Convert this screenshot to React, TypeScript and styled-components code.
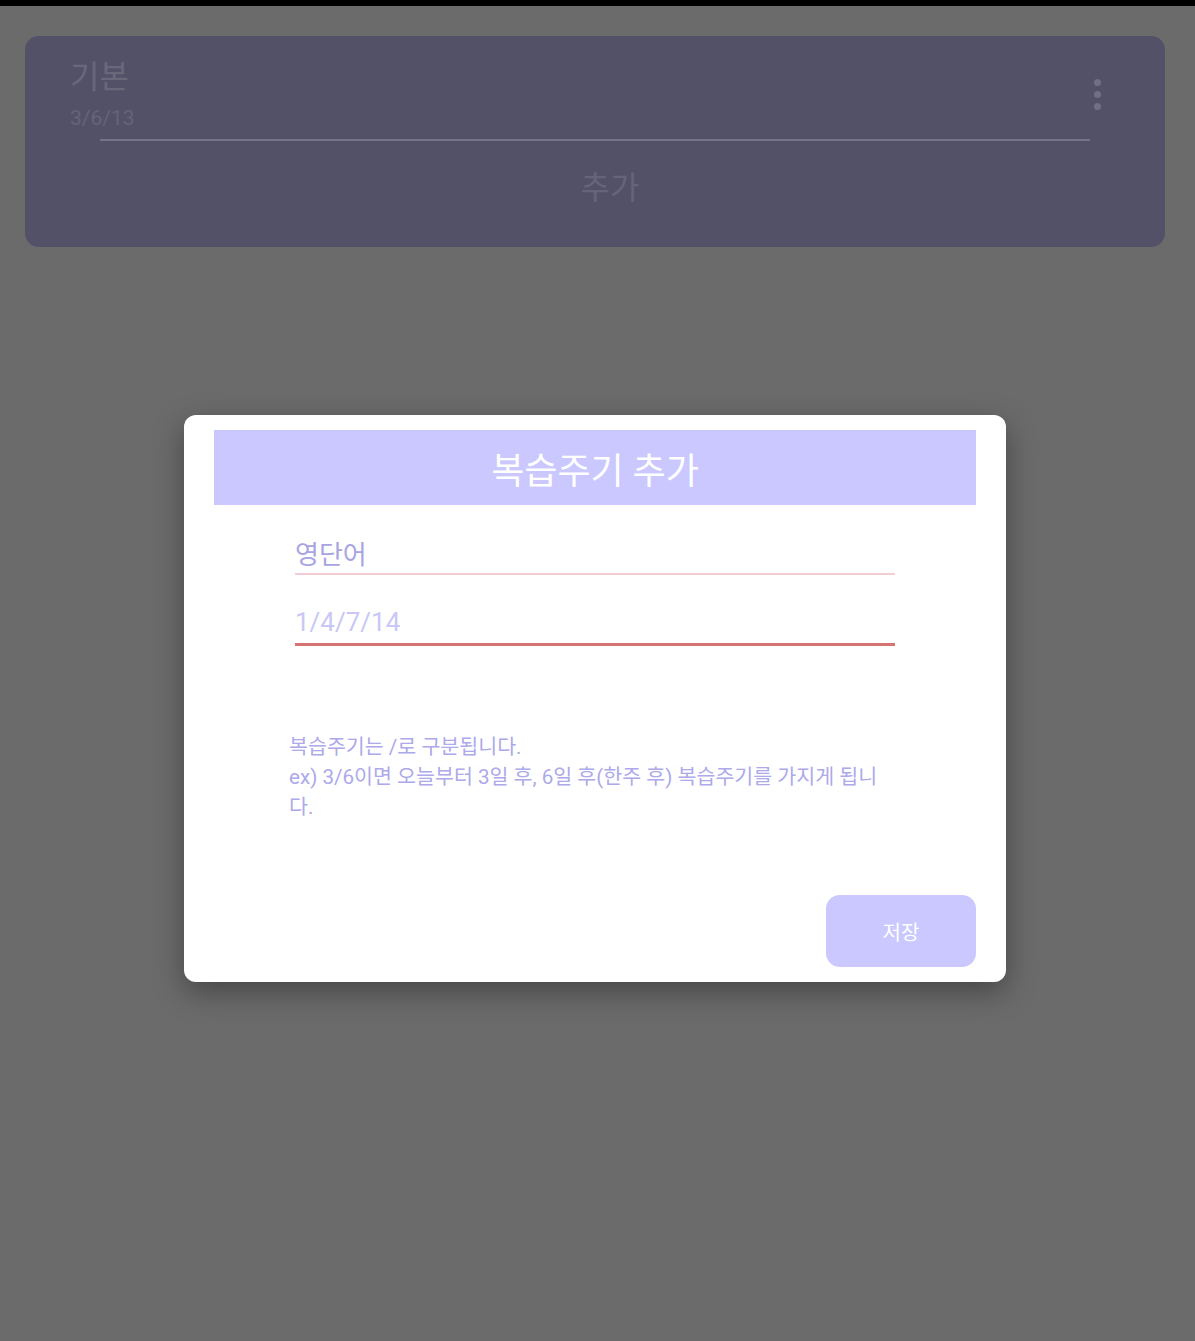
import styled, { createGlobalStyle } from "styled-components";

const GlobalStyle = createGlobalStyle`
  body {
    margin: 0;
    background: #6b6b6b;
    font-family: Roboto, "Noto Sans CJK KR", "Noto Sans", sans-serif;
  }
`;

const Page = styled.div`
  position: relative;
  min-height: 1341px;
  background: #6b6b6b;
  overflow: hidden;
`;

const StatusBar = styled.div`
  height: 6px;
  background: #000;
`;

const Card = styled.div`
  margin: 30px 30px 0 25px;
  padding: 20px 0 38px;
  background: #535168;
  border-radius: 14px;
  display: flex;
  flex-direction: column;
`;

const CardHead = styled.div`
  display: flex;
  align-items: flex-start;
  justify-content: space-between;
  padding: 0 64px 0 45px;
`;

const CardTitle = styled.div`
  font-size: 32px;
  line-height: 42px;
  color: #69687b;
`;

const CardSub = styled.div`
  margin-top: 7px;
  font-size: 21px;
  line-height: 26px;
  color: #656478;
`;

const Kebab = styled.div`
  display: flex;
  flex-direction: column;
  gap: 5px;
  margin-top: 23px;
`;

const Dot = styled.span`
  width: 7px;
  height: 7px;
  border-radius: 50%;
  background: #707083;
`;

const CardLine = styled.div`
  height: 2px;
  margin: 8px 75px 0;
  background: #757486;
`;

const AddButton = styled.div`
  margin-top: 26px;
  padding-left: 30px;
  text-align: center;
  font-size: 32px;
  line-height: 42px;
  color: #656478;
`;

const Dialog = styled.div`
  position: absolute;
  top: 415px;
  left: 184px;
  width: 822px;
  height: 567px;
  box-sizing: border-box;
  padding: 15px 30px;
  background: #fff;
  border-radius: 12px;
  box-shadow: 0 10px 30px rgba(0, 0, 0, 0.35);
  display: flex;
  flex-direction: column;
`;

const DialogHeader = styled.div`
  height: 75px;
  background: #cac8fe;
  color: #fff;
  font-size: 36px;
  display: flex;
  align-items: center;
  justify-content: center;
`;

const Form = styled.div`
  padding-left: 81px;
  width: 600px;
  display: flex;
  flex-direction: column;
`;

const Field = styled.div<{ $focused?: boolean; $top: number }>`
  margin-top: ${(p) => p.$top}px;
  height: 42px;
  display: flex;
  align-items: center;
  font-size: 26px;
  color: ${(p) => (p.$focused ? "#cac7f6" : "#a8a4e2")};
  border-bottom: ${(p) => (p.$focused ? "3px solid #d87374" : "2px solid #f3ccd4")};
`;

const Helper = styled.div`
  margin-top: 86px;
  margin-left: -6px;
  width: 600px;
  font-size: 20.6px;
  line-height: 30px;
  color: #ada9ea;
`;

const Footer = styled.div`
  margin-top: auto;
  display: flex;
  justify-content: flex-end;
`;

const SaveButton = styled.button`
  width: 150px;
  height: 72px;
  border: none;
  border-radius: 14px;
  background: #cac8fe;
  color: #fff;
  font-family: inherit;
  font-size: 20px;
`;

export default function App() {
  return (
    <Page>
      <GlobalStyle />
      <StatusBar />
      <Card>
        <CardHead>
          <div>
            <CardTitle>기본</CardTitle>
            <CardSub>3/6/13</CardSub>
          </div>
          <Kebab>
            <Dot />
            <Dot />
            <Dot />
          </Kebab>
        </CardHead>
        <CardLine />
        <AddButton>추가</AddButton>
      </Card>

      <Dialog>
        <DialogHeader>복습주기 추가</DialogHeader>
        <Form>
          <Field $top={26}>영단어</Field>
          <Field $top={26} $focused>
            1/4/7/14
          </Field>
          <Helper>
            복습주기는 /로 구분됩니다.
            <br />
            ex) 3/6이면 오늘부터 3일 후, 6일 후(한주 후) 복습주기를 가지게 됩니다.
          </Helper>
        </Form>
        <Footer>
          <SaveButton>저장</SaveButton>
        </Footer>
      </Dialog>
    </Page>
  );
}
